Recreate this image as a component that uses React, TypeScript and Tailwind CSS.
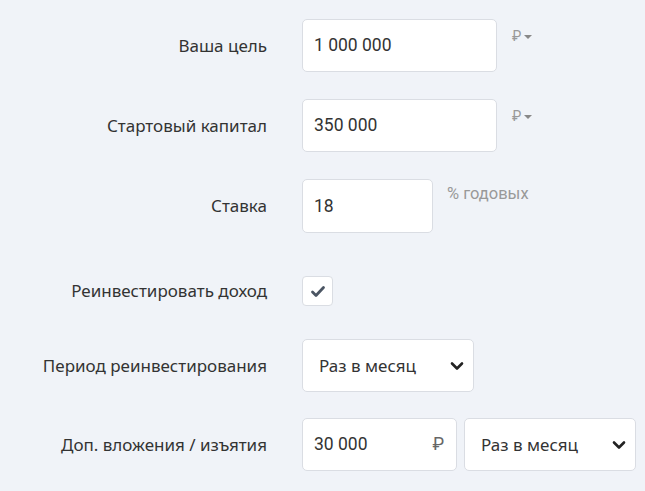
import React from "react";

const labelFont = { fontFamily: '"Noto Sans", "Open Sans", sans-serif' };

function Chevron() {
  return (
    <svg width="14" height="10" viewBox="0 0 14 10" fill="none">
      <path d="M2 2.5 L7 7.5 L12 2.5" stroke="#222" strokeWidth="2.6" strokeLinecap="round" strokeLinejoin="round" />
    </svg>
  );
}

function Label({ children }: { children: React.ReactNode }) {
  return (
    <div className="w-[267px] shrink-0 text-right text-[17px] text-[#333] whitespace-nowrap" style={labelFont}>
      {children}
    </div>
  );
}

function Caret() {
  return (
    <span className="w-0 h-0 border-l-[4px] border-r-[4px] border-t-[4px] border-l-transparent border-r-transparent border-t-[#888]" />
  );
}

export default function App() {
  return (
    <div className="w-[645px] h-[491px] bg-[#f0f3f8] overflow-hidden">
      <div className="flex flex-col pt-[19px]">
        {/* Row 1 */}
        <div className="flex items-center gap-[35px]">
          <Label>Ваша цель</Label>
          <div className="flex items-start">
            <div className="w-[195px] h-[53px] bg-white border border-[#dadde3] rounded-[5px] flex items-center pl-[11px] text-[17.5px] text-[#333] font-['Roboto',sans-serif]">
              1 000 000
            </div>
            <div className="ml-[15px] mt-[7px] flex items-center gap-[3px] text-[14px] text-[#999] font-['Roboto',sans-serif]">
              <span>₽</span>
              <Caret />
            </div>
          </div>
        </div>
        {/* Row 2 */}
        <div className="flex items-center gap-[35px] mt-[27px]">
          <Label>Стартовый капитал</Label>
          <div className="flex items-start">
            <div className="w-[195px] h-[53px] bg-white border border-[#dadde3] rounded-[5px] flex items-center pl-[11px] text-[17.5px] text-[#333] font-['Roboto',sans-serif]">
              350 000
            </div>
            <div className="ml-[15px] mt-[7px] flex items-center gap-[3px] text-[14px] text-[#999] font-['Roboto',sans-serif]">
              <span>₽</span>
              <Caret />
            </div>
          </div>
        </div>
        {/* Row 3 */}
        <div className="flex items-center gap-[35px] mt-[27px]">
          <Label>Ставка</Label>
          <div className="flex items-start">
            <div className="w-[131px] h-[54px] bg-white border border-[#dadde3] rounded-[5px] flex items-center pl-[11px] text-[17.5px] text-[#333] font-['Roboto',sans-serif]">
              18
            </div>
            <div className="ml-[14px] mt-[3px] text-[16.5px] text-[#999] font-['Roboto',sans-serif]">% годовых</div>
          </div>
        </div>
        {/* Row 4 */}
        <div className="flex items-center gap-[35px] mt-[43px]">
          <Label>Реинвестировать доход</Label>
          <div className="w-[31px] h-[30px] bg-white border border-[#dadde3] rounded-[4px] flex items-center justify-center">
            <svg width="16" height="13" viewBox="0 0 16 13">
              <path d="M2.5 7 L6 10.5 L13.5 2.5" fill="none" stroke="#4b5563" strokeWidth="2.8" strokeLinecap="round" strokeLinejoin="round" />
            </svg>
          </div>
        </div>
        {/* Row 5 */}
        <div className="flex items-center gap-[35px] mt-[33px]">
          <Label>Период реинвестирования</Label>
          <div className="w-[172px] h-[53px] bg-white border border-[#dadde3] rounded-[5px] flex items-center justify-between pl-[16px] pr-[9px] text-[17px] text-[#333]" style={labelFont}>
            <span>Раз в месяц</span>
            <Chevron />
          </div>
        </div>
        {/* Row 6 */}
        <div className="flex items-center gap-[35px] mt-[26px]">
          <Label>Доп. вложения / изъятия</Label>
          <div className="flex items-center gap-[7px]">
            <div className="w-[155px] h-[53px] bg-white border border-[#dadde3] rounded-[5px] flex items-center justify-between pl-[11px] pr-[12px] text-[17.5px] text-[#333] font-['Roboto',sans-serif]">
              <span>30 000</span>
              <span className="text-[#666]">₽</span>
            </div>
            <div className="w-[172px] h-[53px] bg-white border border-[#dadde3] rounded-[5px] flex items-center justify-between pl-[16px] pr-[9px] text-[17px] text-[#333]" style={labelFont}>
              <span>Раз в месяц</span>
              <Chevron />
            </div>
          </div>
        </div>
      </div>
    </div>
  );
}
